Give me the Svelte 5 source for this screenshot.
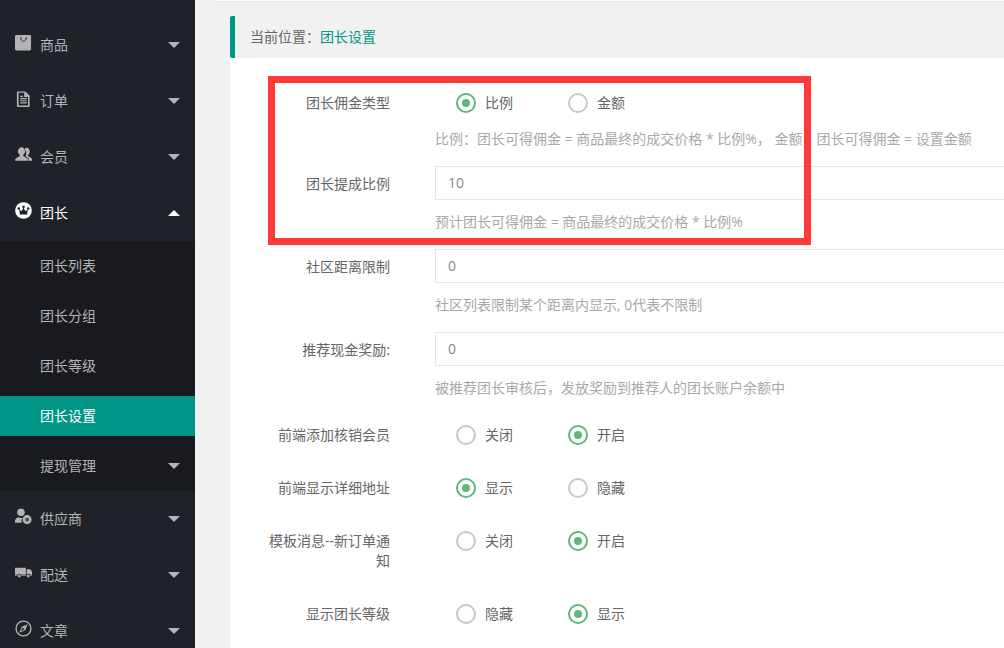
<script>
	const menuTop = [
		{ label: '商品', icon: 'bag' },
		{ label: '订单', icon: 'file' },
		{ label: '会员', icon: 'users' }
	];
	const subMenu = [
		{ label: '团长列表' },
		{ label: '团长分组' },
		{ label: '团长等级' },
		{ label: '团长设置', active: true },
		{ label: '提现管理', arrow: true }
	];
	const menuBottom = [
		{ label: '供应商', icon: 'supplier' },
		{ label: '配送', icon: 'truck' },
		{ label: '文章', icon: 'compass' }
	];

	const inputRows = [
		{ label: '社区距离限制', value: '0', hint: '社区列表限制某个距离内显示, 0代表不限制' },
		{ label: '推荐现金奖励:', value: '0', hint: '被推荐团长审核后，发放奖励到推荐人的团长账户余额中' }
	];
	const radioRows = [
		{ label: '前端添加核销会员', a: '关闭', b: '开启', on: 'b', cls: 'r1' },
		{ label: '前端显示详细地址', a: '显示', b: '隐藏', on: 'a', cls: 'r2' },
		{ label: '模板消息--新订单通知', a: '关闭', b: '开启', on: 'b', cls: 'r3' },
		{ label: '显示团长等级', a: '隐藏', b: '显示', on: 'b', cls: 'r4' }
	];
</script>

{#snippet icon(name)}
	<svg class="icon" viewBox="0 0 18 18" fill="currentColor">
		{#if name === 'bag'}
			<rect x="0" y="1" width="17" height="16.500" rx="1.500" />
			<path d="M6 3.500c.3 3 1.500 4 3 4s2.700-1 3-4" fill="none" stroke="#1f2229" stroke-width="1" />
		{:else if name === 'file'}
			<path transform="translate(0 1)" fill-rule="evenodd" d="M3 0.500h8l4.500 4.500v11a1 1 0 0 1-1 1H3a1 1 0 0 1-1-1v-14.500a1 1 0 0 1 1-1zM3.800 2v13.500h10V6.500h-4V2zM5.500 7.500h7v1.200h-7zM5.500 9.800h7v1.200h-7zM5.500 12.100h7v1.200h-7zM5.500 5.200h3v1.200h-3z" />
		{:else if name === 'users'}
			<g transform="translate(0 0.300) scale(1.060)">
				<path d="M11.500 1.500c2 0 3.200 1.700 3.200 3.700 0 1.500-.7 2.900-1.700 3.500v1l3.500 2.300c.3.200.5.500.5.800v1.700h-3.300v-1.400c0-.9-.5-1.600-1.300-2l-1.900-1c.4-.6.700-1.500.7-2.400 0-1.900-.6-3.600-1.600-4.700.4-.9 1-1.500 1.900-1.500z" />
				<path d="M6.500 1c2.100 0 3.500 1.900 3.500 4 0 1.600-.7 3-1.800 3.700v1.100l4.300 2.300c.4.200.6.500.6.900v1.500H.2v-1.500c0-.4.200-.7.600-.9l4-2.300V8.700C3.700 8 3 6.600 3 5c0-2.100 1.400-4 3.500-4z" />
			</g>
		{:else if name === 'crown'}
			<circle cx="9" cy="9" r="8.800" />
			<g fill="#1f2229">
				<circle cx="9" cy="5" r="1.400" />
				<circle cx="4" cy="6.800" r="1.300" />
				<circle cx="14" cy="6.800" r="1.300" />
				<path d="M4.500 7.500L6.800 9.800 9 5.800l2.200 4 2.300-2.300-.6 5.700H5.100z" />
			</g>
		{:else if name === 'supplier'}
			<circle cx="6.300" cy="4.500" r="4" />
			<path d="M0 15.500v-2c0-1.800 2-3.300 3.500-3.800.8.500 1.800.8 2.800.8.700 0 1.300-.1 1.900-.3-.8.900-1.300 2.300-1.300 3.500 0 .7.100 1.300.3 1.800z" />
			<circle cx="12.800" cy="12.300" r="4.800" />
			<rect x="11" y="10.500" width="3.600" height="3.600" fill="#1f2229" opacity="0.700" />
		{:else if name === 'truck'}
			<path d="M0 4h11.500v8.500H0z" />
			<path d="M12.300 5.500h3c1.500 0 2.700 1.500 2.700 3.500v3.500h-5.700z" />
			<rect x="0" y="11" width="18" height="1" fill="#1f2229" opacity="0.500" />
			<circle cx="4.500" cy="12.800" r="1.900" stroke="#1f2229" stroke-width="0.800" />
			<circle cx="14" cy="12.800" r="1.900" stroke="#1f2229" stroke-width="0.800" />
		{:else if name === 'compass'}
			<circle cx="9" cy="9" r="7.900" fill="none" stroke="currentColor" stroke-width="1.400" />
			<path fill-rule="evenodd" d="M13.500 4.500L10.800 10.800 4.500 13.500 7.200 7.200zM8 8l-1.700 3.700L10 10z" />
		{/if}
	</svg>
{/snippet}

{#snippet caret(up)}
	<span class="caret" class:up></span>
{/snippet}

{#snippet menuItem(item)}
	<div class="menu-item">
		<span class="menu-icon">{@render icon(item.icon)}</span>
		<span class="menu-label">{item.label}</span>
		{@render caret(false)}
	</div>
{/snippet}

{#snippet radio(text, checked)}
	<label class="radio">
		<span class="radio-dot" class:checked></span>
		<span class="radio-text">{text}</span>
	</label>
{/snippet}

<div class="page">
	<aside class="sidebar">
		{#each menuTop as item}
			{@render menuItem(item)}
		{/each}
		<div class="menu-item open">
			<span class="menu-icon">{@render icon('crown')}</span>
			<span class="menu-label">团长</span>
			{@render caret(true)}
		</div>
		<div class="sub-menu">
			{#each subMenu as sub}
				<div class="sub-item" class:active={sub.active}>
					<span class="sub-label">{sub.label}</span>
					{#if sub.arrow}
						{@render caret(false)}
					{/if}
				</div>
			{/each}
		</div>
		{#each menuBottom as item}
			{@render menuItem(item)}
		{/each}
	</aside>

	<main class="main">
		<div class="topline"></div>
		<div class="crumb">
			<span class="crumb-label">当前位置：</span><span class="crumb-link">团长设置</span>
		</div>
		<div class="panel">
			<div class="field first">
				<div class="field-label">团长佣金类型</div>
				<div class="field-body">
					<div class="radios">
						{@render radio('比例', true)}
						{@render radio('金额', false)}
					</div>
					<div class="hint">比例：团长可得佣金 = 商品最终的成交价格 * 比例%， 金额：团长可得佣金 = 设置金额</div>
				</div>
			</div>
			<div class="field">
				<div class="field-label boxed">团长提成比例</div>
				<div class="field-body">
					<div class="input">10</div>
					<div class="hint">预计团长可得佣金 = 商品最终的成交价格 * 比例%</div>
				</div>
			</div>
			{#each inputRows as row}
				<div class="field">
					<div class="field-label boxed">{row.label}</div>
					<div class="field-body">
						<div class="input">{row.value}</div>
						<div class="hint">{row.hint}</div>
					</div>
				</div>
			{/each}
			{#each radioRows as row}
				<div class="field switch {row.cls}">
					<div class="field-label">{row.label}</div>
					<div class="field-body">
						<div class="radios">
							{@render radio(row.a, row.on === 'a')}
							{@render radio(row.b, row.on === 'b')}
						</div>
					</div>
				</div>
			{/each}
			<div class="highlight"></div>
		</div>
	</main>
</div>

<style>
	:global(body) {
		margin: 0;
		overflow: hidden;
	}

	.page {
		display: flex;
		width: 1004px;
		height: 648px;
		overflow: hidden;
		background: #f1f1f1;
		font-family: "Open Sans", "Noto Sans CJK SC", sans-serif;
		font-size: 14px;
		color: #666;
	}

	.sidebar {
		flex: 0 0 195px;
		height: 648px;
		padding-top: 17px;
		box-sizing: border-box;
		background: #1f2229;
		overflow: hidden;
	}

	.menu-item {
		display: flex;
		align-items: center;
		height: 56px;
		padding: 0 15px;
		color: #b4b4b6;
	}

	.menu-item.open {
		color: #fff;
	}

	.menu-icon {
		display: flex;
		width: 25px;
		margin-top: -5px;
	}

	.icon {
		display: block;
		width: 17px;
		height: 17px;
	}

	.menu-label {
		flex: 1;
		line-height: 20px;
	}

	.caret {
		width: 0;
		height: 0;
		border-left: 6px solid transparent;
		border-right: 6px solid transparent;
		border-top: 6px solid currentColor;
	}

	.caret.up {
		border-top: 0;
		border-bottom: 6px solid currentColor;
	}

	.sub-menu {
		background: #181a1f;
	}

	.sub-item {
		display: flex;
		align-items: center;
		justify-content: space-between;
		height: 50px;
		padding: 0 15px 0 40px;
		color: #b4b4b6;
	}

	.sub-label {
		line-height: 20px;
	}

	.sub-item.active {
		height: 40px;
		margin: 5px 0;
		background: #009688;
		color: #fff;
	}

	.main {
		flex: 1;
		min-width: 0;
		padding: 0 0 0 35px;
		position: relative;
	}

	.topline {
		position: absolute;
		left: 20px;
		right: 0;
		top: 0;
		height: 1px;
		background: #fff;
		border-bottom: 1px solid #e6e6e6;
	}

	.crumb {
		display: flex;
		align-items: center;
		height: 42px;
		margin-top: 16px;
		padding-left: 15px;
		box-sizing: border-box;
		border-left: 5px solid #009688;
		border-radius: 2px 0 0 2px;
		font-size: 14px;
		line-height: 20px;
		color: #666;
	}

	.crumb-link {
		color: #009688;
	}

	.panel {
		position: relative;
		height: 590px;
		background: #fff;
		padding-top: 25px;
		box-sizing: border-box;
	}

	.field {
		display: flex;
		align-items: flex-start;
	}

	.field-label {
		flex: 0 0 160px;
		box-sizing: border-box;
		padding: 10px 0 0 35px;
		text-align: right;
		font-size: 14px;
		line-height: 20px;
		color: #666;
	}

	.field-label.boxed {
		padding-top: 8px;
	}

	.field-body {
		flex: 0 0 640px;
		margin-left: 45px;
	}

	.radios {
		display: flex;
		height: 39px;
		align-items: center;
		padding-left: 21px;
	}

	.radio {
		display: flex;
		align-items: center;
		width: 112px;
		font-size: 14px;
		line-height: 20px;
		color: #666;
	}

	.radio-dot {
		position: relative;
		flex: none;
		box-sizing: border-box;
		width: 20px;
		height: 20px;
		margin-right: 9px;
		border: 2px solid #c8c8c8;
		border-radius: 50%;
		background: #fff;
	}

	.radio-dot.checked {
		border-color: #5fb878;
	}

	.radio-dot.checked::after {
		content: '';
		position: absolute;
		left: 4px;
		top: 4px;
		width: 8px;
		height: 8px;
		border-radius: 50%;
		background: #5fb878;
	}

	.radio-text {
		margin-top: 1px;
	}

	.hint {
		margin-top: 7px;
		height: 20px;
		font-size: 14px;
		line-height: 20px;
		color: #a8a8a8;
		white-space: nowrap;
	}

	.input {
		box-sizing: border-box;
		height: 34px;
		padding-left: 12px;
		border: 1px solid #e6e6e6;
		background: #fff;
		line-height: 32px;
		font-size: 14px;
		color: #888;
	}

	.input + .hint {
		margin-top: 12px;
	}

	.field:not(.switch) {
		height: 83px;
	}

	.switch {
		height: 53px;
	}

	.r3 {
		height: 73px;
	}

	.highlight {
		position: absolute;
		left: 38px;
		top: 18px;
		box-sizing: border-box;
		width: 543px;
		height: 169px;
		border: 7px solid #fd3a3a;
		pointer-events: none;
	}
</style>
